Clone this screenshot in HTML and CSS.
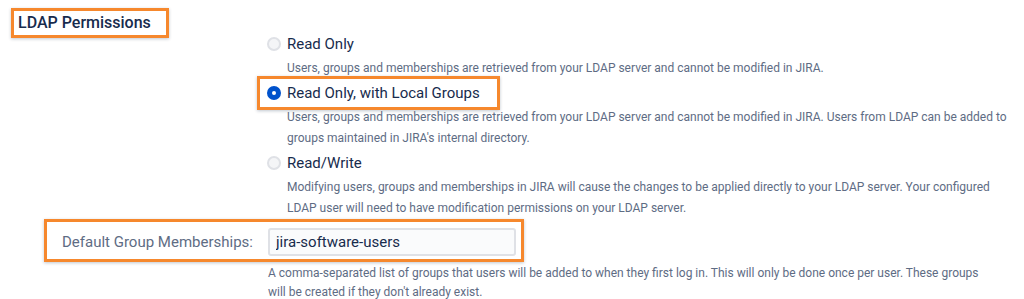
FILE: index.html
```html
<!DOCTYPE html>
<html lang="en">
<head>
  <meta charset="UTF-8" />
  <meta name="viewport" content="width=device-width, initial-scale=1" />
  <title>LDAP Permissions</title>
  <link rel="stylesheet" href="styles.css">
</head>
<body>

  <!-- Section heading -->
  <div class="section-head">
    <h3 class="callout">LDAP Permissions</h3>
  </div>

  <!-- Permission options -->
  <div class="options">
    <div class="option">
      <label class="radio-row">
        <span class="radio"></span>
        <span>Read Only</span>
      </label>
      <div class="desc">Users, groups and memberships are retrieved from your LDAP server and cannot be modified in JIRA.</div>
    </div>

    <div class="option">
      <label class="radio-row callout callout-radio">
        <span class="radio checked"></span>
        <span>Read Only, with Local Groups</span>
      </label>
      <div class="desc">Users, groups and memberships are retrieved from your LDAP server and cannot be modified in JIRA. Users from LDAP can be added to groups maintained in JIRA's internal directory.</div>
    </div>

    <div class="option">
      <label class="radio-row">
        <span class="radio"></span>
        <span>Read/Write</span>
      </label>
      <div class="desc">Modifying users, groups and memberships in JIRA will cause the changes to be applied directly to your LDAP server. Your configured LDAP user will need to have modification permissions on your LDAP server.</div>
    </div>
  </div>

  <!-- Default group field -->
  <div class="field-row">
    <div class="callout callout-field">
      <label for="groupsInput" class="field-label">Default Group Memberships:</label>
      <input type="text" id="groupsInput" class="text-input" value="jira-software-users" />
    </div>
    <div class="help">A comma-separated list of groups that users will be added to when they first log in. This will only be done once per user. These groups will be created if they don't already exist.</div>
  </div>

</body>
</html>
```

FILE: styles.css
```css
body {
  margin: 0;
  background: #fff;
  color: #172b4d;
  font-family: Roboto, "Liberation Sans", sans-serif;
  font-size: 15px;
}
.callout {
  border: 3px solid #f6882d;
  box-shadow: 0 1px 3px rgba(9,30,66,0.25);
}
.section-head {
  padding-top: 8px;
  margin-bottom: -4px;
}
.section-head h3 {
  display: inline-block;
  margin: 0 0 0 11px;
  padding: 0 15px 0 4px;
  font-size: 16px;
  font-weight: 500;
  line-height: 24px;
}
.options {
  margin-left: 267px;
  width: 740px;
}
.option {
  display: flex;
  flex-direction: column;
  align-items: flex-start;
}
.radio-row {
  display: flex;
  align-items: center;
  gap: 6px;
  height: 20px;
  line-height: 20px;
  color: #172b4d;
}
.callout-radio {
  margin: -7px 0 -7px -10px;
  padding: 4px 17px 4px 7px;
}
.radio {
  width: 10px;
  height: 10px;
  border-radius: 50%;
  border: 2px solid #dfe1e6;
  background: #f4f5f7;
  position: relative;
}
.radio.checked {
  background: #0052cc;
  border-color: #0052cc;
}
.radio.checked::after {
  content: "";
  position: absolute;
  left: 3px;
  top: 3px;
  width: 4px;
  height: 4px;
  border-radius: 50%;
  background: #fff;
}
.desc {
  margin: 4px 0 4px 20px;
  font-size: 12px;
  line-height: 21px;
  color: #5e6c84;
}
.field-row {
  margin-top: -4px;
}
.callout-field {
  display: inline-flex;
  align-items: center;
  gap: 18px;
  margin-left: 44px;
  padding: 6px 5px 3px 15px;
}
.field-label {
  width: 188px;
  text-align: right;
  color: #5e6c84;
  white-space: nowrap;
}
.text-input {
  width: 248px;
  height: 28px;
  box-sizing: border-box;
  margin: 0;
  padding: 0 6px;
  border: 2px solid #dfe1e6;
  border-radius: 3px;
  background: #fafbfc;
  font-family: inherit;
  font-size: 15px;
  color: #172b4d;
}
.help {
  margin: 2px 0 0 268px;
  width: 720px;
  font-size: 12px;
  line-height: 19px;
  color: #5e6c84;
}
```
